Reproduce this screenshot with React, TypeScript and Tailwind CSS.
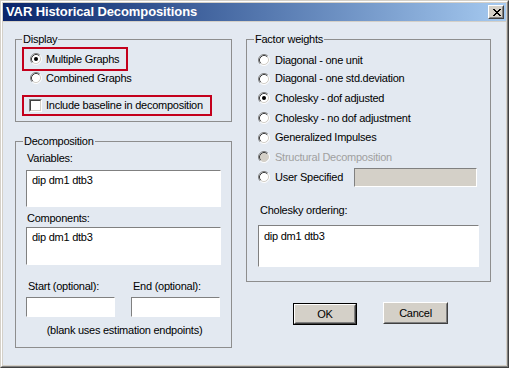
import React from "react";

function Radio({ checked = false, disabled = false }: { checked?: boolean; disabled?: boolean }) {
  return (
    <svg width="12" height="12" viewBox="0 0 12 12" className="shrink-0">
      <circle cx="6" cy="6" r="4.5" fill={disabled ? "#d4d0c8" : "#ffffff"} />
      <path d="M2.11 9.89 A5.5 5.5 0 0 1 9.89 2.11" fill="none" stroke="#808080" strokeWidth="1" />
      <path d="M9.89 2.11 A5.5 5.5 0 0 1 2.11 9.89" fill="none" stroke="#ffffff" strokeWidth="1" />
      <path d="M2.82 9.18 A4.5 4.5 0 0 1 9.18 2.82" fill="none" stroke="#404040" strokeWidth="1" />
      <path d="M9.18 2.82 A4.5 4.5 0 0 1 2.82 9.18" fill="none" stroke="#d4d0c8" strokeWidth="1" />
      {checked && <circle cx="6" cy="6" r="2" fill="#000000" />}
    </svg>
  );
}

function Checkbox() {
  return (
    <div className="w-[13px] h-[13px] shrink-0 border border-t-[#808080] border-l-[#808080] border-b-white border-r-white">
      <div className="w-full h-full border border-t-[#404040] border-l-[#404040] border-b-[#d4d0c8] border-r-[#d4d0c8] bg-white" />
    </div>
  );
}

function CloseGlyph() {
  const rows = ["XX....XX", ".XX..XX.", "..XXXX..", "...XX...", "..XXXX..", ".XX..XX.", "XX....XX"];
  const rects: React.ReactElement[] = [];
  rows.forEach((r, y) =>
    r.split("").forEach((c, x) => {
      if (c === "X") rects.push(<rect key={`${x}-${y}`} x={x} y={y} width="1" height="1" fill="#000" />);
    })
  );
  return (
    <svg width="8" height="7" viewBox="0 0 8 7" shapeRendering="crispEdges">
      {rects}
    </svg>
  );
}

const factorRows = [
  { label: "Diagonal - one unit", h: "h-[18px]" },
  { label: "Diagonal - one std.deviation", h: "h-[19px]" },
  { label: "Cholesky - dof adjusted", h: "h-[20px]", checked: true },
  { label: "Cholesky - no dof adjustment", h: "h-[20px]" },
  { label: "Generalized Impulses", h: "h-[19px]" },
  { label: "Structural Decomposition", h: "h-[20px]", disabled: true },
];

export default function App() {
  return (
    <div className="w-[509px] h-[368px] border border-t-[#d4d0c8] border-l-[#d4d0c8] border-b-[#404040] border-r-[#404040] font-['Liberation_Sans',Arial,sans-serif] text-[11px] leading-[13px] tracking-[-0.25px] text-black">
      <div className="h-full border border-t-white border-l-white border-b-[#808080] border-r-[#808080] bg-[#d4d0c8] p-px flex flex-col">
        {/* Title bar */}
        <div className="h-[18px] shrink-0 bg-gradient-to-r from-[#0a246a] to-[#a6caf0] flex items-center justify-between pl-[3px] pr-[2px]">
          <span className="text-white font-bold text-[13px] leading-[16px] tracking-[-0.1px]">VAR Historical Decompositions</span>
          <div className="w-[16px] h-[14px] border border-t-white border-l-white border-b-[#404040] border-r-[#404040] bg-[#d4d0c8]">
            <div className="w-full h-full border border-t-[#d4d0c8] border-l-[#d4d0c8] border-b-[#808080] border-r-[#808080] flex items-center justify-center pl-px">
              <CloseGlyph />
            </div>
          </div>
        </div>

        {/* Body */}
        <div className="mt-px flex-1 bg-[#e3e9f1] flex pt-[11px] pl-[12px] gap-[14px]">
          {/* Left column */}
          <div className="w-[217px] flex flex-col">
            <fieldset className="h-[89px] border border-[#8e8e8e]">
              <legend className="ml-[6px] px-px h-[13px]">Display</legend>
              <div className="mt-px ml-[6px] w-[106px] h-[24px] border-2 border-[#c4001c] flex items-center pl-[6px] gap-[4px]">
                <Radio checked />
                <span>Multiple Graphs</span>
              </div>
              <div className="ml-[14px] h-[14px] flex items-center gap-[4px]">
                <Radio />
                <span>Combined Graphs</span>
              </div>
              <div className="mt-[10px] ml-[6px] w-[190px] h-[21px] border-2 border-[#c4001c] flex items-center pl-[5px] gap-[4px]">
                <Checkbox />
                <span>Include baseline in decomposition</span>
              </div>
            </fieldset>

            <fieldset className="mt-[13px] h-[213px] border border-[#8e8e8e]">
              <legend className="ml-[7px] px-px h-[13px]">Decomposition</legend>
              <div className="mt-[4px] ml-[11px] h-[13px]">Variables:</div>
              <div className="mt-[5px] ml-[10px] w-[195px] h-[37px] bg-white border border-t-[#808080] border-l-[#808080] border-b-white border-r-white pl-[5px] pt-[3px]">
                dip dm1 dtb3
              </div>
              <div className="mt-[5px] ml-[11px] h-[13px]">Components:</div>
              <div className="mt-[2px] ml-[10px] w-[195px] h-[38px] bg-white border border-t-[#808080] border-l-[#808080] border-b-white border-r-white pl-[5px] pt-[3px]">
                dip dm1 dtb3
              </div>
              <div className="mt-[15px] ml-[10px] flex gap-[16px]">
                <div className="w-[89px]">
                  <div className="h-[13px] pl-[2px]">Start (optional):</div>
                  <div className="mt-[4px] h-[20px] bg-white border border-t-[#808080] border-l-[#808080] border-b-white border-r-white" />
                </div>
                <div className="w-[89px]">
                  <div className="h-[13px] pl-[2px]">End (optional):</div>
                  <div className="mt-[4px] h-[20px] bg-white border border-t-[#808080] border-l-[#808080] border-b-white border-r-white" />
                </div>
              </div>
              <div className="mt-[7px] h-[13px] text-center pl-[2px]">(blank uses estimation endpoints)</div>
            </fieldset>
          </div>

          {/* Right column */}
          <div className="w-[245px] flex flex-col">
            <fieldset className="h-[249px] border border-[#8e8e8e]">
              <legend className="ml-[7px] px-px h-[13px]">Factor weights</legend>
              <div className="mt-[5px]">
                {factorRows.map((r) => (
                  <div key={r.label} className={`${r.h} ml-[11px] flex items-center gap-[5px]`}>
                    <Radio checked={r.checked} disabled={r.disabled} />
                    <span className={r.disabled ? "text-[#a0a0a0]" : ""}>{r.label}</span>
                  </div>
                ))}
                <div className="h-[20px] ml-[11px] flex items-center gap-[5px]">
                  <Radio />
                  <span>User Specified</span>
                  <div className="ml-auto mr-[13px] w-[123px] h-[19px] bg-[#d4d0c8] border border-t-[#808080] border-l-[#808080] border-b-white border-r-white" />
                </div>
              </div>
              <div className="mt-[17px] ml-[13px] h-[13px]">Cholesky ordering:</div>
              <div className="mt-[8px] ml-[11px] w-[221px] h-[42px] bg-white border border-t-[#808080] border-l-[#808080] border-b-white border-r-white pl-[5px] pt-[4px]">
                dip dm1 dtb3
              </div>
            </fieldset>

            <div className="flex items-start">
              <div className="mt-[21px] ml-[47px] w-[64px] h-[22px] border border-black bg-[#d4d0c8]">
                <div className="w-full h-full border border-t-white border-l-white border-b-[#404040] border-r-[#404040]">
                  <div className="w-full h-full border border-t-[#d4d0c8] border-l-[#d4d0c8] border-b-[#808080] border-r-[#808080] flex items-center justify-center">
                    OK
                  </div>
                </div>
              </div>
              <div className="mt-[20px] ml-[26px] w-[65px] h-[22px] border border-t-white border-l-white border-b-[#404040] border-r-[#404040] bg-[#d4d0c8]">
                <div className="w-full h-full border border-t-[#d4d0c8] border-l-[#d4d0c8] border-b-[#808080] border-r-[#808080] flex items-center justify-center">
                  Cancel
                </div>
              </div>
            </div>
          </div>
        </div>
      </div>
    </div>
  );
}
